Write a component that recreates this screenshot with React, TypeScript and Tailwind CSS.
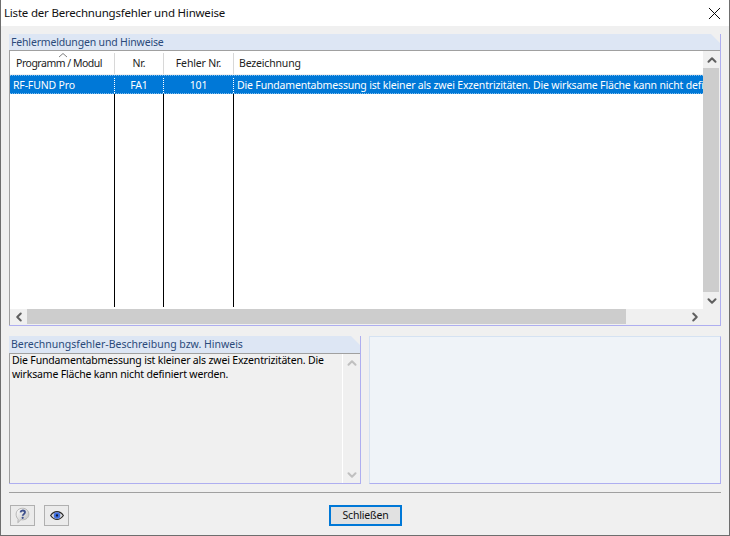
import { ChevronLeft, ChevronRight, ChevronUp, ChevronDown, X } from "lucide-react";

function HelpIcon() {
  return (
    <svg width="17" height="17" viewBox="0 0 20 20">
      <defs>
        <linearGradient id="bubble" x1="0" y1="0" x2="1" y2="1">
          <stop offset="0" stopColor="#ffffff" />
          <stop offset="1" stopColor="#bcbcbc" />
        </linearGradient>
      </defs>
      <path d="M10 1.500c4.200 0 7.500 2.900 7.500 6.900s-3.300 6.700-7.500 6.700c-.6 0-1.200 0-1.800-.2L4.500 18.500l.4-4.200C3.300 13 2.500 10.900 2.500 8.400 2.500 4.400 5.800 1.500 10 1.500z" fill="url(#bubble)" stroke="#adadad" />
      <path d="M7.600 6.300c.3-1.500 1.400-2.200 2.700-2.200 1.600 0 2.600.9 2.600 2.200 0 2-2.500 2.100-2.600 4" fill="none" stroke="#3d4f8c" strokeWidth="2.200" />
      <circle cx="10.200" cy="12.700" r="1.300" fill="#3d4f8c" />
    </svg>
  );
}

function EyeIcon() {
  return (
    <svg width="14" height="11" viewBox="0 0 18 12">
      <path d="M.8 6C3 2.700 5.800 1 9 1s6 1.700 8.200 5C15 9.300 12.200 11 9 11S3 9.300.8 6z" fill="#dcdcdc" stroke="#2a2a2a" strokeWidth="1.500" />
      <circle cx="9" cy="6" r="4.200" fill="#3f6fe0" />
      <circle cx="9" cy="6" r="1.500" fill="#10182c" />
    </svg>
  );
}

function ScrollBtn({ children }: { children: React.ReactNode }) {
  return <div className="flex h-[17px] w-[17px] shrink-0 items-center justify-center">{children}</div>;
}

const columns = [
  { label: "Programm / Modul", w: "w-[105px] pr-[6px] tracking-[-0.5px]" },
  { label: "Nr.", w: "w-[49px]" },
  { label: "Fehler Nr.", w: "w-[70px]" },
];

export default function App() {
  return (
    <div className="flex h-[536px] w-[730px] flex-col overflow-hidden border-x border-b border-[#6e6e6e] bg-[#f0f0f0] font-['Noto_Sans',sans-serif] text-[10.5px] tracking-[-0.17px] text-black">
      {/* title bar */}
      <div className="flex h-[26px] shrink-0 items-center justify-between bg-white pl-[3px] pr-[4px]">
        <span className="text-[11.5px] tracking-[-0.2px] text-[#111]">Liste der Berechnungsfehler und Hinweise</span>
        <X size={21} strokeWidth={1.1} />
      </div>

      <div className="flex min-h-0 flex-1 flex-col px-[8px] pt-[8px]">
        {/* top group */}
        <div className="flex h-[292px] shrink-0 flex-col border-r border-b border-[#aeaef0]">
          <div className="flex h-[16px] shrink-0 items-center bg-[#dde6f4] pl-[2px] pt-[1px] text-[#2b4a7a] [clip-path:polygon(0_0,calc(100%-9px)_0,100%_9px,100%_100%,0_100%)]">Fehlermeldungen und Hinweise</div>
          <div className="flex min-h-0 flex-1 flex-col border-l border-t border-[#a0a0a0]">
            <div className="flex min-h-0 flex-1">
              <div className="relative flex min-w-0 flex-1 flex-col overflow-hidden bg-white">
                <div className="flex h-[24px] shrink-0 border-b border-[#f0f0f0] pt-[2px]">
                  {columns.map((c) => (
                    <div key={c.label} className={`${c.w} flex shrink-0 items-center justify-center border-r border-[#d8d8d8] text-[#222]`}>{c.label}</div>
                  ))}
                  <div className="flex flex-1 items-center pl-[5px] text-[#222]">Bezeichnung</div>
                </div>
                <svg className="absolute left-[48px] top-[1px]" width="10" height="6" viewBox="0 0 10 6">
                  <path d="M1 5l4-3.500L9 5" fill="none" stroke="#808080" />
                </svg>
                <div className="flex h-[19px] shrink-0 border-y border-dotted border-[#7fbcec] bg-[#0078d7] pt-[2px] text-white">
                  <div className="flex w-[105px] shrink-0 items-center border-r border-dotted border-white pl-[3px]">RF-FUND Pro</div>
                  <div className="flex w-[49px] shrink-0 items-center justify-center border-r border-dotted border-white">FA1</div>
                  <div className="flex w-[70px] shrink-0 items-center justify-center border-r border-dotted border-white">101</div>
                  <div className="flex min-w-0 flex-1 items-center overflow-hidden whitespace-nowrap pl-[3px]">Die Fundamentabmessung ist kleiner als zwei Exzentrizitäten. Die wirksame Fläche kann nicht definiert werden.</div>
                </div>
                <div className="flex flex-1 pb-[2px]">
                  <div className="w-[105px] shrink-0 border-r border-black" />
                  <div className="w-[49px] shrink-0 border-r border-black" />
                  <div className="w-[70px] shrink-0 border-r border-black" />
                </div>
              </div>
              {/* vertical scrollbar */}
              <div className="flex w-[17px] shrink-0 flex-col bg-[#f0f0f0] pr-[1px] text-[#606060]">
                <ScrollBtn><ChevronUp size={14} strokeWidth={3.5} /></ScrollBtn>
                <div className="flex-1 bg-[#cdcdcd]" />
                <ScrollBtn><ChevronDown size={14} strokeWidth={3.5} /></ScrollBtn>
              </div>
            </div>
            {/* horizontal scrollbar */}
            <div className="flex h-[15px] shrink-0 items-center bg-[#f0f0f0] text-[#606060]">
              <ScrollBtn><ChevronLeft size={14} strokeWidth={3.5} /></ScrollBtn>
              <div className="h-[15px] w-[599px] bg-[#cdcdcd]" />
              <div className="flex-1" />
              <ScrollBtn><ChevronRight size={14} strokeWidth={3.5} /></ScrollBtn>
              <div className="w-[17px]" />
            </div>
            <div className="h-px shrink-0 bg-[#f0f0f0]" />
          </div>
        </div>

        {/* lower panels */}
        <div className="mt-[10px] flex h-[148px] shrink-0 gap-[8px]">
          <div className="flex w-[352px] shrink-0 flex-col border-r border-b border-[#aeaef0]">
            <div className="flex h-[17px] shrink-0 items-center bg-[#dde6f4] pl-[2px] tracking-normal text-[#2b4a7a] [clip-path:polygon(0_0,calc(100%-9px)_0,100%_9px,100%_100%,0_100%)]">Berechnungsfehler-Beschreibung bzw. Hinweis</div>
            <div className="flex min-h-0 flex-1 border-l border-t border-[#a0a0a0]">
              <div className="flex-1 border-r border-white pl-[2px] leading-[13.5px]">Die Fundamentabmessung ist kleiner als zwei Exzentrizitäten. Die wirksame Fläche kann nicht definiert werden.</div>
              <div className="flex w-[17px] shrink-0 flex-col justify-between text-[#c0c0c0]">
                <ScrollBtn><ChevronUp size={14} strokeWidth={3.5} /></ScrollBtn>
                <ScrollBtn><ChevronDown size={14} strokeWidth={3.5} /></ScrollBtn>
              </div>
            </div>
          </div>
          <div className="flex-1 border border-[#d5e2f2] border-r-[#aeaef0] border-b-[#aeaef0] bg-[#eff3f8]" />
        </div>

        {/* footer */}
        <div className="mt-[8px] h-px shrink-0 bg-[#a0a0a0]" />
        <div className="flex items-start pt-[12px]">
          <div className="ml-[1px] flex h-[21px] w-[25px] items-center justify-center border border-[#b0b0b0] bg-[#ebebeb]"><HelpIcon /></div>
          <div className="ml-[9px] flex h-[21px] w-[25px] items-center justify-center border border-[#b0b0b0] bg-[#ebebeb]"><EyeIcon /></div>
          <button className="ml-[260px] flex h-[21px] w-[73px] items-center justify-center border-2 border-[#0078d7] bg-[#e1e1e1] text-[#111]">Schließen</button>
        </div>
      </div>
    </div>
  );
}
